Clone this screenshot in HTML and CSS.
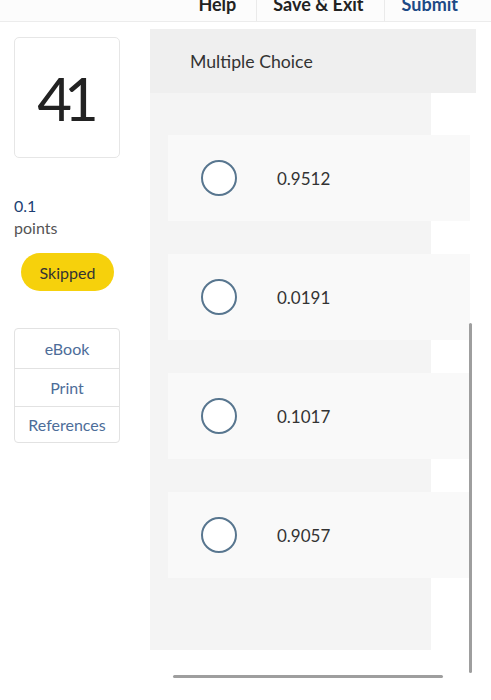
FILE: index.html
```html
<!DOCTYPE html>
<html>
<head>
<meta charset="utf-8">
<link rel="stylesheet" href="styles.css">
</head>
<body>
<header class="topbar">
  <a class="top-link help">Help</a>
  <a class="top-link save">Save &amp; Exit</a>
  <a class="top-link submit">Submit</a>
</header>
<main class="layout">
  <aside class="side">
    <div class="qnum">41</div>
    <div class="pts">0.1</div>
    <div class="pts-label">points</div>
    <div class="status">Skipped</div>
    <div class="links">
      <div class="link-row first">eBook</div>
      <div class="link-row mid">Print</div>
      <div class="link-row last">References</div>
    </div>
  </aside>
  <section class="question">
    <div class="q-head">Multiple Choice</div>
    <div class="q-body">
      <div class="option"><span class="radio"></span><span class="opt-text">0.9512</span></div>
      <div class="option"><span class="radio"></span><span class="opt-text">0.0191</span></div>
      <div class="option"><span class="radio"></span><span class="opt-text">0.1017</span></div>
      <div class="option"><span class="radio"></span><span class="opt-text">0.9057</span></div>
    </div>
  </section>
</main>
<div class="vscroll"></div>
<div class="hscroll"></div>
</body>
</html>
```

FILE: styles.css
```css
html, body {
  margin: 0;
  padding: 0;
  background: #ffffff;
  font-family: "Lato", "Open Sans", sans-serif;
  color: #333;
  width: 491px;
  height: 700px;
  overflow: hidden;
  position: relative;
}

.topbar {
  height: 21px;
  border-bottom: 1px solid #ececec;
  background: #fcfcfc;
  display: flex;
  justify-content: flex-end;
  align-items: flex-end;
  padding-right: 15px;
  overflow: hidden;
}

.top-link {
  font-size: 18px;
  font-weight: 700;
  line-height: 18px;
  color: #222;
  padding: 0 19px 8px;
  border-left: 1px solid #eaeaea;
  height: 21px;
  display: flex;
  align-items: flex-end;
  box-sizing: border-box;
  white-space: nowrap;
}

.top-link.help {
  border-left: none;
  padding-right: 20px;
}

.top-link.save {
  padding: 0 20px 8px 16px;
}

.top-link.submit {
  color: #1d4a86;
  padding: 0 18px 8px 17px;
}

.layout {
  display: flex;
  align-items: flex-start;
  padding-left: 14px;
  gap: 30px;
}

.side {
  width: 106px;
  display: flex;
  flex-direction: column;
  padding-top: 15px;
}

.qnum {
  height: 121px;
  box-sizing: border-box;
  border: 1px solid #e6e6e6;
  border-radius: 5px;
  display: flex;
  align-items: center;
  justify-content: center;
  font-size: 60px;
  color: #222;
  letter-spacing: -8px;
  padding-right: 6px;
}

.pts {
  margin-top: 37px;
  font-size: 16px;
  line-height: 22px;
  color: #1d3f73;
}

.pts-label {
  font-size: 16px;
  line-height: 22px;
  color: #555;
}

.status {
  margin: 14px 0 0 7px;
  width: 93px;
  height: 38px;
  border-radius: 19px;
  background: #f6d10c;
  display: flex;
  align-items: center;
  justify-content: center;
  font-size: 16px;
  color: #333;
}

.links {
  margin-top: 37px;
  border: 1px solid #e2e2e2;
  border-radius: 4px;
  display: flex;
  flex-direction: column;
}

.link-row {
  display: flex;
  align-items: center;
  justify-content: center;
  font-size: 16px;
  color: #4d6d99;
}

.link-row.first {
  height: 39px;
}

.link-row.mid {
  height: 37px;
  border-top: 1px solid #e2e2e2;
}

.link-row.last {
  height: 35px;
  border-top: 1px solid #e2e2e2;
}

.question {
  margin-top: 7px;
  display: flex;
  flex-direction: column;
}

.q-head {
  width: 326px;
  height: 64px;
  box-sizing: border-box;
  background: #efefef;
  padding-left: 40px;
  display: flex;
  align-items: center;
  font-size: 17.7px;
  color: #333;
}

.q-body {
  width: 281px;
  background: #f4f4f4;
  padding: 42px 0 72px;
  display: flex;
  flex-direction: column;
  gap: 33px;
}

.option {
  width: 302px;
  height: 86px;
  margin-left: 18px;
  background: #f9f9f9;
  display: flex;
  align-items: center;
  padding-left: 33px;
  box-sizing: border-box;
}

.radio {
  width: 36px;
  height: 36px;
  box-sizing: border-box;
  border: 2px solid #58768f;
  border-radius: 50%;
  background: #fff;
  flex: none;
}

.opt-text {
  margin-left: 40px;
  font-size: 17px;
  color: #333;
}

.vscroll {
  position: absolute;
  left: 469px;
  top: 323px;
  width: 3px;
  height: 350px;
  border-radius: 2px;
  background: #9e9e9e;
}

.hscroll {
  position: absolute;
  left: 173px;
  top: 675px;
  width: 270px;
  height: 3px;
  border-radius: 2px;
  background: #9e9e9e;
}
```
